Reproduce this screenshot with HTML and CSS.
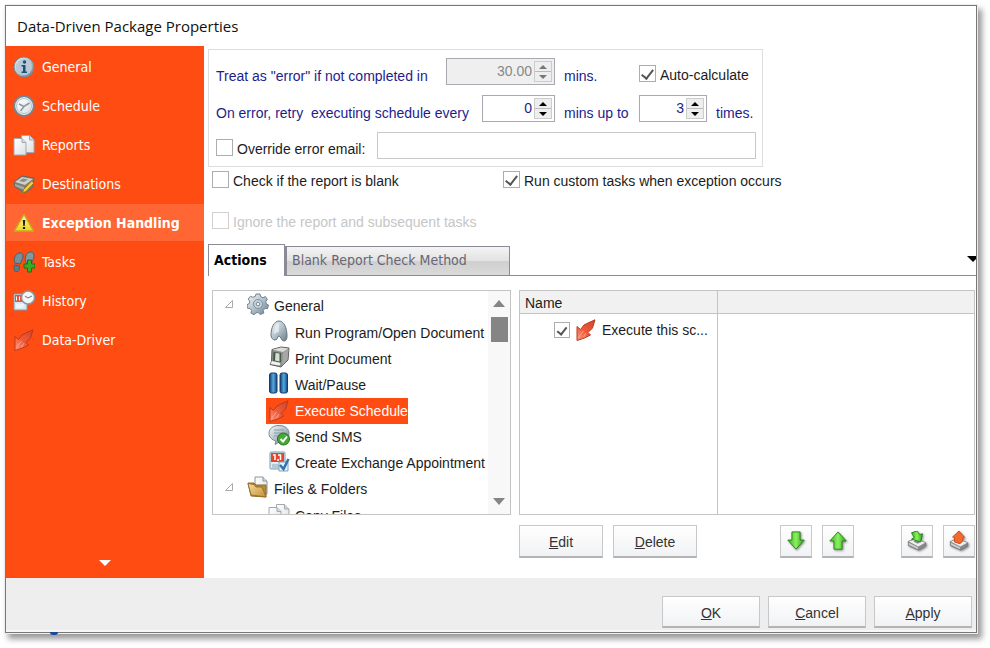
FILE: index.html
```html
<!DOCTYPE html>
<html lang="en">
<head>
<meta charset="utf-8">
<meta name="viewport" content="width=device-width, initial-scale=1">
<title>Data-Driven Package Properties</title>
<link rel="stylesheet" href="styles.css">
</head>
<body>
<svg class="defs" aria-hidden="true">
  <defs>
    <linearGradient id="silver" x1="0" y1="0" x2="1" y2="1"><stop offset="0" stop-color="#f4f8fa"/><stop offset=".5" stop-color="#b4c2cc"/><stop offset="1" stop-color="#6c7c88"/></linearGradient>
    <linearGradient id="page" x1="0" y1="0" x2="1" y2="1"><stop offset="0" stop-color="#ffffff"/><stop offset="1" stop-color="#dde2e6"/></linearGradient>
    <linearGradient id="red" x1="1" y1="0" x2="0" y2="1"><stop offset="0" stop-color="#d0452c"/><stop offset=".55" stop-color="#f05a38"/><stop offset="1" stop-color="#ff9a7c"/></linearGradient>
    <linearGradient id="green" x1="0" y1="0" x2="1" y2="0"><stop offset="0" stop-color="#34b81f"/><stop offset=".5" stop-color="#8cf060"/><stop offset="1" stop-color="#2ba318"/></linearGradient>
    <linearGradient id="blue" x1="0" y1="0" x2="1" y2="0"><stop offset="0" stop-color="#0d3f72"/><stop offset=".5" stop-color="#58a8e0"/><stop offset="1" stop-color="#0d4680"/></linearGradient>
    <linearGradient id="yellow" x1="0" y1="0" x2="0" y2="1"><stop offset="0" stop-color="#fff9a0"/><stop offset="1" stop-color="#eed51c"/></linearGradient>
    <linearGradient id="folder" x1="0" y1="0" x2="1" y2="1"><stop offset="0" stop-color="#f7dda0"/><stop offset="1" stop-color="#c48f35"/></linearGradient>
    <symbol id="i-arrow" viewBox="0 0 22 22"><path d="M20 .8 17.500 9 13 13.500 15.500 16 9.500 19 2 21.500 2 7.500 5.500 10.500 9 6 14 3.500Z" fill="url(#red)" stroke="#b73a22" stroke-linejoin="round"/><path d="m3.500 18.500 5-6.500M8.500 18l2.500-4" stroke="#ffb49c" fill="none" opacity=".7"/></symbol>
    <symbol id="i-pages" viewBox="0 0 22 22"><path d="M8.500 1.500h8l4.500 4.500v12.500H8.500Z" fill="url(#page)" stroke="#a3a9ae"/><path d="M16.500 1.500V6H21" fill="#d4dade" stroke="#a3a9ae"/><path d="M1 4.500h8l4 4v12.500H1Z" fill="url(#page)" stroke="#a3a9ae"/><path d="M9 4.500v4h4" fill="#d4dade" stroke="#a3a9ae"/></symbol>
    <symbol id="i-calendar" viewBox="0 0 22 22"><rect x="2" y="2" width="15" height="17" rx="1" fill="#dcebf4" stroke="#8298a8"/><path d="M3 3h13v9H3z" fill="#e0482e"/><path d="M5 5h2v5M10 5h2.500v5M9 10h2" stroke="#fff" stroke-width="1.500" fill="none"/><path d="M4 15h10M4 17h8" stroke="#8aa8be"/></symbol>
    <symbol id="i-tray" viewBox="0 0 22 22"><path d="m1.500 11.500 8-3 11 4.500v3.500l-7.500 4.500L1.500 16Z" fill="#8a8a8a" stroke="#777" stroke-linejoin="round"/><path d="m2 11.500 7.500-2.500 10.500 4-7.500 4Z" fill="#eee"/><path d="m7 11.500 3-1.500 5 2-3 2Z" fill="#888"/><path d="m2 13 10 5v2L2 15.500Z" fill="#ccc"/></symbol>
  </defs>
</svg>
<div class="window">
  <header class="titlebar"><h1>Data-Driven Package Properties</h1></header>
  <div class="body">
    <nav class="sidebar" aria-label="Sections">
      <ul>
        <li><a href="#"><svg viewBox="0 0 22 22"><circle cx="11" cy="11" r="10" fill="url(#silver)" stroke="#748997"/><circle cx="11" cy="11" r="8" fill="#b9cad5"/><circle cx="11.500" cy="6" r="1.700" fill="#17517e"/><path d="M8.500 9h4v6.500H14V17H8.500v-1.500H10v-5H8.500Z" fill="#17517e"/></svg>General</a></li>
        <li><a href="#"><svg viewBox="0 0 22 22"><circle cx="11" cy="11" r="9.800" fill="#e9eff2" stroke="#738591" stroke-width="1.800"/><circle cx="11" cy="11" r="7.500" fill="url(#page)" stroke="#b9c3c9"/><path d="m6 9 5 2.500L16.500 8M11 11.500 7.500 16" fill="none" stroke="#8998a2" stroke-width="1.500"/></svg>Schedule</a></li>
        <li><a href="#"><svg><use href="#i-pages"/></svg>Reports</a></li>
        <li><a href="#"><svg viewBox="0 0 22 22"><path d="M1 9 9 3l12 2-1 9-8 6L2 14Z" fill="#7e7d76" stroke="#666"/><path d="m2 9 7-5 11 2-8 6Z" fill="#cfd0c9"/><path d="m6 8 4-2.500 5 1L11 9Z" fill="#8b8d88"/><path d="m2 11 9 3v3l-9-4Z" fill="#a9aaa4"/><path d="m18.500 8 2.500 2-8 8.500-3.500 1.500 1-3.500Z" fill="#f3cc37" stroke="#997617"/></svg>Destinations</a></li>
        <li><a href="#" class="current" aria-current="page"><svg viewBox="0 0 22 22"><path d="M11 2.500 20.500 19h-19Z" fill="url(#yellow)" stroke="#c7ae1c" stroke-width="1.500" stroke-linejoin="round"/><path d="M9.700 8h2.600l-.6 6h-1.400ZM9.900 15h2.200v2H9.900Z" fill="#222"/></svg>Exception Handling</a></li>
        <li><a href="#"><svg viewBox="0 0 22 22"><path d="M6 2c4-1 5 3 3 7L7 13 2 12C0 8 2 3 6 2Z" fill="#76909c" stroke="#455e69"/><path d="m1.500 14 5 1c0 4-1 6-3.500 5.500S1 17 1.500 14Z" fill="#617b88" stroke="#455e69"/><path d="M17 1c4-1 5 4 3 8l-2 4-5-1c-2-5 0-10 4-11Z" fill="#8299a3" stroke="#455e69"/><path d="M14.500 9h4v4h3.500v4h-3.500v4h-4v-4H11v-4h3.500Z" fill="#38ad26" stroke="#187312"/></svg>Tasks</a></li>
        <li><a href="#"><svg viewBox="0 0 22 22"><path d="M1 4h13v16H1z" fill="#d9e8f3" stroke="#8298a8"/><path d="M2 5h8v7H2z" fill="#e25540"/><path d="M3.500 6.500v4m3-4v4M3 15h8M3 17h7" stroke="#fff"/><circle cx="15" cy="7.500" r="6.500" fill="#f3f5f6" stroke="#8d989e" stroke-width="1.500"/><path d="m12 6 3 2 4-2" fill="none" stroke="#69747a"/></svg>History</a></li>
        <li><a href="#"><svg><use href="#i-arrow"/></svg>Data-Driver</a></li>
      </ul>
      <button class="more" type="button" aria-label="More sections"><svg viewBox="0 0 12 6"><path d="M0 0h12L6 6Z" fill="#fff"/></svg></button>
    </nav>
    <main>
      <fieldset class="retry">
        <label class="field-label" for="limit">Treat as "error" if not completed in</label>
        <div class="spin spin-wide off"><input id="limit" type="text" value="30.00" disabled><span class="arrows"><button type="button" disabled aria-label="Increase"></button><button type="button" disabled aria-label="Decrease"></button></span></div>
        <span class="unit">mins.</span>
        <label class="check auto"><input type="checkbox" checked><span>Auto-calculate</span></label>
        <label class="field-label label-wide" for="every">On error, retry&nbsp; executing schedule every</label>
        <div class="spin"><input id="every" type="text" value="0"><span class="arrows"><button type="button" aria-label="Increase"></button><button type="button" aria-label="Decrease"></button></span></div>
        <label class="unit" for="upto">mins up to</label>
        <div class="spin"><input id="upto" type="text" value="3"><span class="arrows"><button type="button" aria-label="Increase"></button><button type="button" aria-label="Decrease"></button></span></div>
        <span class="unit">times.</span>
        <div class="override">
          <label class="check"><input type="checkbox"><span>Override error email:</span></label>
          <input class="email" type="text" aria-label="Error email">
        </div>
      </fieldset>
      <div class="options">
        <label class="check"><input type="checkbox"><span>Check if the report is blank</span></label>
        <label class="check"><input type="checkbox" checked><span>Run custom tasks when exception occurs</span></label>
        <label class="check off"><input type="checkbox" disabled><span>Ignore the report and subsequent tasks</span></label>
      </div>
      <div class="tabs" role="tablist">
        <button class="tab active" type="button" role="tab" aria-selected="true">Actions</button>
        <button class="tab" type="button" role="tab" aria-selected="false">Blank Report Check Method</button>
        <div class="tab-rest"><button type="button" aria-label="Tab list"><svg viewBox="0 0 12 6"><path d="M0 0h12L6 6Z"/></svg></button></div>
      </div>
      <div class="panes">
        <div class="tree">
          <ul>
            <li><div class="node"><svg class="twist" viewBox="0 0 8 8"><path d="M7.500 .5v7h-7Z" fill="#fff" stroke="#aaa"/></svg><svg viewBox="0 0 22 22"><path d="m9 1 4 0 .6 2.600L16 4.700l2.400-1.200 2 3-1.600 2 .5 2.300 2.200 1.200-1 3.600-2.700-.1-1.600 2 .6 2.600-3.600 1.500-1.700-2-2.600.2-1.600 2-3.400-1.700.7-2.600-1.600-2-2.600-.3L0 11.700l2.300-1.300.4-2.300-1.500-2 2.200-2.800 2.500 1L8.300 3.400Z" fill="url(#silver)" stroke="#718390"/><circle cx="11" cy="11" r="4.500" fill="#c7d2da" stroke="#7f919d"/><circle cx="11" cy="11" r="1.800" fill="#f2f6f8" stroke="#788a96"/></svg>General</div>
              <ul>
                <li class="node"><svg viewBox="0 0 22 22"><path d="M11 1C6 1 3 8 3 15c0 3 2 5 4 5 3 0 2-4 4-4s2 5 5 5c2 0 3-2 3-5C19 8 16 1 11 1Z" fill="url(#silver)" stroke="#64747f"/><path d="M11 3c-4 1-5 6-5 11 2-1 3-2 5-2Z" fill="#eef4f8" opacity=".7"/></svg>Run Program/Open Document</li>
                <li class="node"><svg viewBox="0 0 22 22"><path d="M4 3.500 13 1l8 1-1 12-7 7-11-2.500 1.500-3Z" fill="#8b8e8b" stroke="#5c5f5c" stroke-linejoin="round"/><path d="M4.500 3.800 13 1.500l7.500 1L15 6Z" fill="#dcdddb"/><path d="M15 6.500 20.500 3l-1 10.700L14 19.500Z" fill="#a5a8a5"/><path d="M5.500 6 13 7v9.500L5 15Z" fill="#4c5650"/><path d="m7.500 7 4 .5v8l-4.500-1Z" fill="#cfe3cf"/><path d="m4 15 8.500 2-1 2.500L2.500 18Z" fill="#f2f2f0"/></svg>Print Document</li>
                <li class="node"><svg viewBox="0 0 22 22"><rect x="1.500" y="1" width="7.500" height="20" rx="2" fill="url(#blue)" stroke="#123d67"/><rect x="12" y="1" width="7.500" height="20" rx="2" fill="url(#blue)" stroke="#123d67"/></svg>Wait/Pause</li>
                <li class="node"><span class="selected"><svg><use href="#i-arrow"/></svg>Execute Schedule</span></li>
                <li class="node"><svg viewBox="0 0 22 22"><path d="M11 1.500c6 0 10 3 10 8s-4 8-9 8l-5 3 1-3.500c-4-1-7-4-7-7.500 0-5 4-8 10-8Z" fill="url(#silver)" stroke="#7d8a92"/><path d="M6 6h10M6 9h9M6 12h6" stroke="#8c9ba5"/><circle cx="15.500" cy="15" r="6" fill="#46a934" stroke="#26721c"/><path d="m12.500 15 2.500 2.500 4-5" stroke="#fff" stroke-width="2" fill="none"/></svg>Send SMS</li>
                <li class="node"><svg viewBox="0 0 22 22"><use href="#i-calendar"/><path d="M11 12h9v9h-9z" fill="#e6f2fb" stroke="#8aa3b8"/><path d="m12 15 3.500 4L20.500 9" stroke="#2b73b4" stroke-width="2.500" fill="none"/></svg>Create Exchange Appointment</li>
              </ul></li>
            <li><div class="node"><svg class="twist" viewBox="0 0 8 8"><path d="M7.500 .5v7h-7Z" fill="#fff" stroke="#aaa"/></svg><svg viewBox="0 0 22 22"><path d="M8 1h8l4 4v13H8Z" fill="url(#page)" stroke="#8e949a"/><path d="M16 1v4h4" fill="#ddd" stroke="#8e949a"/><path d="M1 7h6l2 2h10v12L4 20Z" fill="#b98b3b" stroke="#8e6a28"/><path d="M1 7.500 4 19l15 2-4-10H9L7 8.500Z" fill="url(#folder)" stroke="#99712b"/></svg>Files &amp; Folders</div>
              <ul>
                <li class="node"><svg><use href="#i-pages"/></svg>Copy Files</li>
              </ul></li>
          </ul>
          <div class="scrollbar" aria-hidden="true"><svg viewBox="0 0 12 7"><path d="M0 7h12L6 0Z" fill="#858585"/></svg><span class="thumb"></span><svg class="down" viewBox="0 0 12 7"><path d="M0 0h12L6 7Z" fill="#858585"/></svg></div>
        </div>
        <div class="right">
          <div class="list">
            <table>
              <thead><tr><th scope="col">Name</th><th aria-label="Details"></th></tr></thead>
              <tbody><tr><td><label class="check task"><input type="checkbox" checked><svg><use href="#i-arrow"/></svg><span>Execute this sc...</span></label></td><td></td></tr></tbody>
            </table>
          </div>
          <div class="tools">
            <button class="btn" type="button"><span><u>E</u>dit</span></button>
            <button class="btn" type="button"><span><u>D</u>elete</span></button>
            <div class="icon-pair">
              <button class="btn" type="button" aria-label="Move down"><svg viewBox="0 0 22 22"><path d="M6.500 1h9v9H20l-9 10-9-10h4.500Z" fill="url(#green)" stroke="#257f19" stroke-linejoin="round"/></svg></button>
              <button class="btn" type="button" aria-label="Move up"><svg viewBox="0 0 22 22"><path d="M6.500 20h9v-9H20L11 1 2 11h4.500Z" fill="url(#green)" stroke="#257f19" stroke-linejoin="round"/></svg></button>
            </div>
            <div class="icon-pair">
              <button class="btn" type="button" aria-label="Import"><svg viewBox="0 0 22 22"><use href="#i-tray"/><path d="m5 2 6-2 3 4 3-1-2 9-10-3 3-2Z" fill="url(#green)" stroke="#257f19" stroke-linejoin="round"/></svg></button>
              <button class="btn" type="button" aria-label="Export"><svg viewBox="0 0 22 22"><use href="#i-tray"/><path d="M11 0 4 6.500l2 .5v5l6 2 3-3V8l2-1Z" fill="#f36a2b" stroke="#c84a18" stroke-linejoin="round"/></svg></button>
            </div>
          </div>
        </div>
      </div>
    </main>
  </div>
  <footer>
    <button class="btn" type="button"><span><u>O</u>K</span></button>
    <button class="btn" type="button"><span><u>C</u>ancel</span></button>
    <button class="btn" type="button"><span><u>A</u>pply</span></button>
  </footer>
</div>
</body>
</html>
```
FILE: styles.css
```css
* { box-sizing: border-box; }
body {
  margin: 0;
  padding: 5px 13px 16px 5px;
  min-height: 100vh;
  display: flex;
  background: #fff;
  color: #1c1c1c;
  font: 14px/18px "Liberation Sans", Arial, sans-serif;
}
.defs { position: absolute; width: 0; height: 0; }
svg { display: block; flex: none; width: 22px; height: 22px; }
ul { list-style: none; margin: 0; padding: 0; }
button, input { font: inherit; color: inherit; margin: 0; }
button { padding: 0; border: 0; background: none; }

.window {
  position: relative;
  flex: 1;
  min-width: 0;
  display: flex;
  flex-direction: column;
  border: 1px solid #777;
  background: #fff;
  box-shadow: 0 0 0 1px #eee, 4px 5px 6px 1px #999;
}
.window::after {
  content: "";
  position: absolute;
  left: 44px;
  bottom: -3px;
  width: 8px;
  height: 3px;
  border-radius: 0 0 4px 4px;
  background: #1b4a9c;
}
.titlebar { height: 40px; padding: 9px 11px; }
h1 { margin: 0; font: 15px/22px "Open Sans", sans-serif; color: #111; }
.body { flex: 1; display: flex; min-height: 0; }

.sidebar {
  width: 198px;
  flex: none;
  display: flex;
  flex-direction: column;
  justify-content: space-between;
  padding: 2px 0 12px;
  background: #ff4c12;
  color: #fff;
  font-family: "DejaVu Sans Condensed", "DejaVu Sans", sans-serif;
}
.sidebar ul { display: grid; gap: 2px; }
.sidebar a {
  display: flex;
  align-items: center;
  gap: 7px;
  height: 37px;
  padding-left: 7px;
  color: inherit;
  text-decoration: none;
}
.sidebar .current { background: #ff6633; font-weight: bold; }
.more { align-self: center; }
.more svg { width: 12px; height: 6px; }

main { flex: 1; min-width: 0; display: flex; flex-direction: column; padding: 3px 0 20px 4px; }
.retry {
  width: 555px;
  margin: 0;
  padding: 8px 6px 7px 7px;
  border: 1px solid #ddd;
  display: grid;
  grid-template-columns: 230px 36px 73px 84px 68px auto;
  grid-auto-rows: 27px;
  row-gap: 10px;
  color: #1d1d8c;
}
.field-label, .unit { padding-top: 9px; white-space: nowrap; }
.label-wide, .spin-wide { grid-column: span 2; }
.unit { padding-left: 9px; }
.check { display: flex; align-items: center; gap: 4px; color: #1c1c1c; white-space: nowrap; }
.check span { padding-top: 4px; }
.check input {
  appearance: none;
  flex: none;
  width: 17px;
  height: 17px;
  border: 1px solid #adadad;
  background: #fff;
}
.check input:checked { display: grid; place-items: center; }
.check input:checked::before {
  content: "";
  width: 5px;
  height: 10px;
  border: solid #555;
  border-width: 0 2px 2px 0;
  transform: rotate(38deg);
}
.auto { grid-column: span 2; }
.retry .check { padding-top: 3px; }
.check.off { color: #c6c6c6; }
.check.off input { border-color: #d0d0d0; }
.spin { display: flex; border: 1px solid #aaa9b1; background: #fff; }
.spin input { flex: 1; min-width: 0; width: 0; padding: 0 2px 2px; border: 0; background: none; text-align: right; }
.spin.off { background: #efefef; color: #888; }
.arrows { width: 18px; margin: 2px 2px 2px 0; display: grid; gap: 1px; background: #bbb; border: 1px solid #ccc; }
.arrows button { display: grid; place-items: center; background: #eee; }
.arrows button::before {
  content: "";
  border: solid transparent;
  border-width: 0 4px 4px;
  border-bottom-color: #000;
}
.arrows button:last-child::before { border-width: 4px 4px 0; border-top-color: #000; }
.spin.off button::before { opacity: .5; }
.override { grid-column: 1 / -1; display: flex; gap: 12px; }
.email { flex: 1; min-width: 0; border: 1px solid #c9c9c9; background: #fff; }

.options {
  display: grid;
  grid-template-columns: 291px auto;
  justify-content: start;
  row-gap: 19px;
  padding: 1px 0 0 4px;
}

.tabs { display: flex; align-items: flex-end; margin-top: 13px; font-family: "DejaVu Sans Condensed", sans-serif; }
.tab {
  height: 30px;
  padding: 0 5px 2px;
  width: 225px;
  text-align: left;
  border: 1px solid #8b8b98;
  border-left-width: 2px;
  background: linear-gradient(#f4f4f4, #e2e2e2 50%, #cfcfcf 52%, #dadada);
  color: #666673;
}
.tab.active {
  width: 77px;
  height: 32px;
  border-left-width: 1px;
  border-bottom: 0;
  background: #fff;
  color: #000;
  font-weight: bold;
}
.tab-rest { flex: 1; height: 30px; border-bottom: 1px solid #8b8b98; overflow: hidden; }
.tab-rest button { display: block; margin: 10px -3px 0 auto; }
.tab-rest svg { width: 12px; height: 6px; }

.panes { flex: 1; min-height: 0; display: flex; gap: 8px; padding: 14px 1px 0 4px; }
.tree {
  width: 299px;
  height: 225px;
  display: flex;
  overflow: hidden;
  border: 1px solid #c4c4c4;
}
.tree > ul { flex: 1; padding: 2px 0 0 12px; white-space: nowrap; }
.tree ul ul { padding-left: 43px; }
.node { display: flex; align-items: center; gap: 5px; height: 26px; }
.tree ul ul:last-child { padding-top: 1px; }
.node svg { margin-top: -4px; }
.twist { width: 8px; height: 8px; margin-right: 9px; }
.selected { display: flex; align-items: center; gap: 5px; height: 26px; margin-left: -2px; padding-left: 2px; background: #ff4c12; color: #fff; }
.selected svg { margin-top: 0; }
.scrollbar { flex: none; width: 22px; display: flex; flex-direction: column; align-items: center; padding: 9px 0; background: #f8f8f8; }
.scrollbar svg { width: 12px; height: 7px; }
.thumb { width: 17px; height: 25px; margin-top: 10px; background: #858585; }
.down { margin-top: auto; }

.right { flex: 1; min-width: 0; display: flex; flex-direction: column; gap: 10px; }
.list { height: 225px; border: 1px solid #c4c4c4; display: flex; }
table { width: 100%; height: 100%; table-layout: fixed; border-collapse: collapse; }
th { width: 197px; height: 22px; padding: 3px 5px 0; background: #f1f1f1; border-bottom: 1px solid #c4c4c4; text-align: left; font-weight: normal; }
th:last-child { width: auto; }
th + th, td + td { border-left: 1px solid #c4c4c4; }
td { padding: 5px 0 0 34px; vertical-align: top; }
.task { gap: 5px; }
.task input { width: 16px; height: 16px; }
.task input:checked::before { width: 4px; height: 8px; }
.task span { padding-top: 0; }

.tools { display: flex; gap: 10px; }
.btn {
  display: grid;
  place-items: center;
  width: 84px;
  height: 33px;
  border: 1px solid #c8c8c8;
  border-bottom: 2px solid #b4b4b6;
  background: linear-gradient(#fff, #f1f2f4);
  color: #333;
}
.btn span { padding-top: 2px; }
.icon-pair { display: flex; gap: 10px; margin-left: 37px; }
.icon-pair:nth-child(3) { margin-left: auto; }
.icon-pair .btn { width: 32px; }
.icon-pair svg { width: 20px; height: 20px; filter: drop-shadow(1px 1px 1px #888); }

footer { height: 54px; flex: none; display: flex; justify-content: flex-end; align-items: flex-start; gap: 8px; padding: 18px 4px 0 0; background: #eee; border-bottom: 2px solid #f6f6f6; }
footer .btn { width: 98px; height: 32px; }
```
